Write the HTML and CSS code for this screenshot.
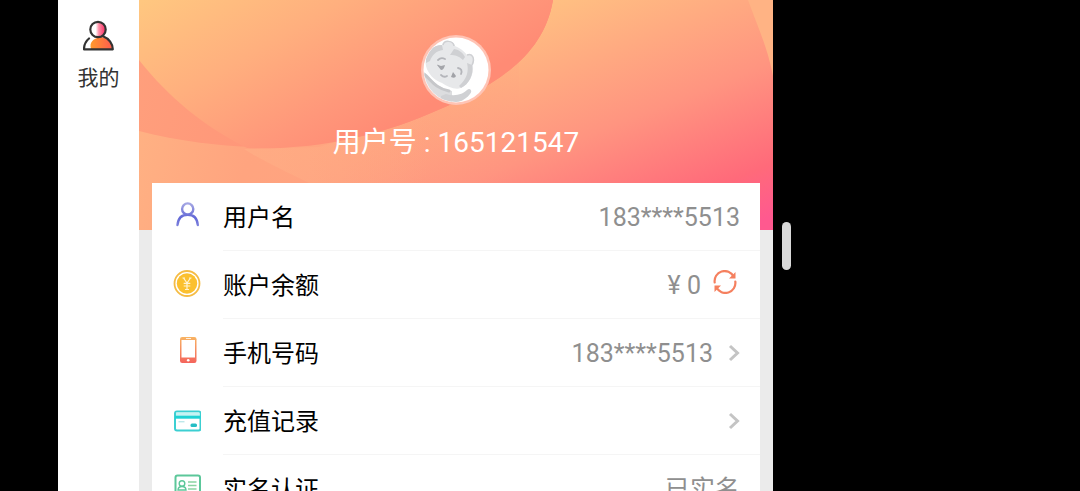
FILE: index.html
```html
<!DOCTYPE html>
<html lang="zh-CN">
<head>
  <meta charset="UTF-8" />
  <meta name="viewport" content="width=device-width, initial-scale=1" />
  <title>我的</title>
  <link rel="stylesheet" href="styles.css">
</head>
<body>
  <div class="screen">

    <!-- left navigation -->
    <nav class="sidebar">
      <a href="#mine" class="nav-item">
        <svg class="nav-icon" viewBox="0 0 32 32" aria-hidden="true">
          <defs>
            <linearGradient id="navHead" x1="0" y1="0" x2="1" y2="0">
              <stop offset="0.35" stop-color="#fff" />
              <stop offset="0.55" stop-color="#ff8fa8" />
              <stop offset="1" stop-color="#f9285f" />
            </linearGradient>
            <linearGradient id="navBody" x1="0" y1="0" x2="1" y2="0">
              <stop offset="0" stop-color="#ff9a2c" />
              <stop offset="1" stop-color="#ff5a50" />
            </linearGradient>
          </defs>
          <path d="M8 29C6 22 10 19 17 17C24 17 29 21 30 29Z" fill="url(#navBody)" />
          <circle cx="15" cy="9.500" r="7.700" fill="url(#navHead)" stroke="#333" stroke-width="2.200" />
          <path d="M6 18.500C3 21 1 25 1 29.300H29.800C29.800 24 26 18.500 20 16.300" fill="none" stroke="#333" stroke-width="2.200" stroke-linejoin="round" stroke-linecap="round" />
        </svg>
        <span>我的</span>
      </a>
    </nav>

    <main class="page">
      <!-- profile header -->
      <header class="hero">
        <svg class="hero-bg" viewBox="0 0 634 230" preserveAspectRatio="none" aria-hidden="true">
          <defs>
            <linearGradient id="base" gradientUnits="userSpaceOnUse" x1="430" y1="-10" x2="535" y2="255">
              <stop offset="0" stop-color="#ffc182" />
              <stop offset="0.5" stop-color="#ff9480" />
              <stop offset="0.83" stop-color="#ff6a7a" />
              <stop offset="1" stop-color="#ff598f" />
            </linearGradient>
            <linearGradient id="bottom" gradientUnits="userSpaceOnUse" x1="0" y1="130" x2="360" y2="230">
              <stop offset="0" stop-color="#ffb183" />
              <stop offset="0.3" stop-color="#ffa47f" />
              <stop offset="1" stop-color="#ff9780" stop-opacity="0" />
            </linearGradient>
            <linearGradient id="sheen" gradientUnits="userSpaceOnUse" x1="105" y1="150" x2="290" y2="170">
              <stop offset="0" stop-color="#ffb98c" stop-opacity="0.350" />
              <stop offset="1" stop-color="#ffb98c" stop-opacity="0" />
            </linearGradient>
            <linearGradient id="wedge" gradientUnits="userSpaceOnUse" x1="0" y1="60" x2="300" y2="150">
              <stop offset="0" stop-color="#ff9f7c" />
              <stop offset="1" stop-color="#ff8b75" />
            </linearGradient>
            <linearGradient id="blob" gradientUnits="userSpaceOnUse" x1="110" y1="-70" x2="230" y2="140">
              <stop offset="0" stop-color="#ffc980" />
              <stop offset="0.45" stop-color="#ffaf7e" />
              <stop offset="0.8" stop-color="#ff977a" />
              <stop offset="1" stop-color="#ff8b75" />
            </linearGradient>
          </defs>
          <rect width="634" height="230" fill="url(#base)" />
          <rect width="380" height="230" fill="url(#bottom)" />
          <path d="M105 149C124 161 142 169 170 183H300V110L180 147Z" fill="url(#sheen)" />
          <path d="M0 0H414C404 60 350 90 280 118C190 154 90 154 0 131Z" fill="url(#wedge)" />
          <path d="M0 0H414C404 60 350 90 280 118C220 142 160 150 108 148C66 127 30 98 0 60Z" fill="url(#blob)" />
          <path d="M609 0H634V76C628 45 617 23 609 0Z" fill="#ffb384" />
        </svg>

        <svg class="avatar" viewBox="0 0 70 70" role="img" aria-label="头像">
          <defs>
            <clipPath id="face"><circle cx="35" cy="35" r="32" /></clipPath>
          </defs>
          <circle cx="35" cy="35" r="35" fill="#ffc4b5" />
          <circle cx="35" cy="35" r="32.500" fill="#fff" />
          <g clip-path="url(#face)">
            <path d="M1 38C10 41 14 53 31 56V70H12L0 56Z" fill="#dcdddf" />
            <path d="M3 39C10 44 13 53 28 56" fill="none" stroke="#c6c7ca" stroke-width="3" stroke-linecap="round" />
            <!-- head with both ears -->
            <path d="M5 31C3 19 11 10 21 10C22 5 33 5 34 11C39 13 43 16 46 20C52 18 55 24 52 30C53 40 48 49 40 53C34 55 27 52 21 48C13 45 7 39 5 31Z" fill="#e7e8ea" />
            <path d="M5 28C4 17 12 10 21 10L22 15C15 16 11 20 9 26Z" fill="#cfd0d3" />
            <path d="M33 14C39 15 42 18 44 22L42 25C38 21 34 20 29 20Z" fill="#cfd0d3" />
            <path d="M51 30C53 40 48 49 40 53L38 51C46 44 48 36 46 28Z" fill="#cfd0d3" />
            <path d="M22 10C23 5 32 5 33 11M46 20C52 18 54 24 51 30" fill="none" stroke="#cfd0d3" stroke-width="1.500" />
            <path d="M25 59C34 62 42 59 46 55C49 52 52 56 49 59C44 66 32 71 20 68V61Z" fill="#d0d1d4" />
            <path d="M17 25Q20 22 24 24M37 33Q42 34 40 39M20 40Q23 43 26 41" fill="none" stroke="#b4b5ba" stroke-width="1.800" stroke-linecap="round" />
            <path d="M16 30C17 29 19 31 20 31L24 30Q23 35 20 35Z" fill="#a4a5aa" />
            <path d="M32 37L35 41Q34 44 30 42Z" fill="#a1a2a7" />
          </g>
        </svg>
        <h1 class="user-id">用户号 : 165121547</h1>
      </header>

      <!-- account list -->
      <ul class="card">
        <li class="row">
          <svg class="row-icon" viewBox="0 0 28 28" aria-hidden="true">
            <defs>
              <linearGradient id="user" x1="0" y1="0" x2="0" y2="28" gradientUnits="userSpaceOnUse">
                <stop offset="0.1" stop-color="#a3a5e3" />
                <stop offset="0.6" stop-color="#6268d6" />
                <stop offset="1" stop-color="#8a8de0" />
              </linearGradient>
            </defs>
            <g fill="none" stroke="url(#user)" stroke-width="2.400" stroke-linecap="round">
              <circle cx="14.700" cy="8" r="5.600" />
              <path d="M4.500 24C5.100 17 9 13.700 14.700 13.700S24.200 17 24.800 24" />
            </g>
          </svg>
          <div class="row-body">
            <span class="name">用户名</span>
            <span class="value">183****5513</span>
          </div>
        </li>

        <li class="row">
          <svg class="row-icon" viewBox="0 0 28 28" aria-hidden="true">
            <circle cx="14" cy="14.500" r="12.500" fill="#fff" stroke="#f5bc45" stroke-width="1.800" />
            <circle cx="14" cy="14.500" r="10.200" fill="#fbc02f" />
            <path d="M10.500 9L14 14L17.500 9M14 14V20.500M10.700 14.300H17.300M10.700 17H17.300M12 20.500H16M9.500 9H12M16 9H18.500" fill="none" stroke="#fff3d2" stroke-width="1.200" />
          </svg>
          <div class="row-body">
            <span class="name">账户余额</span>
            <span class="value">¥ 0</span>
            <button type="button" class="refresh" aria-label="刷新">
              <svg viewBox="0 0 24 24" aria-hidden="true">
                <g fill="none" stroke="#f5805f" stroke-width="2.200" stroke-linecap="round" stroke-linejoin="round">
                  <path d="M1.700 12.500A10 10 0 0 1 20.500 6.500" />
                  <path d="M22.300 11.500A10 10 0 0 1 3.500 17.500" />
                </g>
                <path d="M22.500 2V8.500H16ZM1.500 22V15.500H8Z" fill="#f5805f" />
              </svg>
            </button>
          </div>
        </li>

        <li>
          <a href="#phone" class="row">
            <svg class="row-icon" viewBox="0 0 28 28" aria-hidden="true">
              <defs>
                <linearGradient id="phone" x1="0" y1="0" x2="0" y2="1">
                  <stop offset="0" stop-color="#f8b463" />
                  <stop offset="1" stop-color="#f4645c" />
                </linearGradient>
              </defs>
              <rect x="7" y="0" width="16.500" height="26" rx="2.200" fill="url(#phone)" />
              <rect x="8.500" y="3" width="13.500" height="17.500" fill="#fff" />
              <path d="M13 1.500H18" stroke="#fff" stroke-width="0.800" />
              <circle cx="15.200" cy="23.200" r="1.300" fill="#fff" />
            </svg>
            <div class="row-body">
              <span class="name">手机号码</span>
              <span class="value">183****5513</span>
              <svg class="arrow" viewBox="0 0 12 20" aria-hidden="true"><path d="M2 3L9.500 10L2 17" /></svg>
            </div>
          </a>
        </li>

        <li>
          <a href="#recharge" class="row">
            <svg class="row-icon" viewBox="0 0 28 28" aria-hidden="true">
              <rect x="2" y="6.500" width="25.500" height="19" rx="2" fill="#fff" stroke="#3ccfd2" stroke-width="2" />
              <path d="M3 7.500H26.500V11H3Z" fill="#c5f3f3" />
              <path d="M2 12.200H27.500" stroke="#20d2d4" stroke-width="3" />
              <path d="M5.500 16.800H11.500" stroke="#a2dfe2" stroke-width="1" />
              <rect x="17.500" y="18.500" width="6.500" height="3.500" rx="1.500" fill="#24bdc4" />
            </svg>
            <div class="row-body">
              <span class="name">充值记录</span>
              <svg class="arrow" viewBox="0 0 12 20" aria-hidden="true"><path d="M2 3L9.500 10L2 17" /></svg>
            </div>
          </a>
        </li>

        <li class="row">
          <svg class="row-icon" viewBox="0 0 28 28" aria-hidden="true">
            <g fill="none" stroke="#5cc79a">
              <rect x="2.500" y="2.500" width="24.500" height="22" rx="2" stroke-width="2" />
              <circle cx="9" cy="10.500" r="2.800" stroke-width="1.400" />
              <path d="M5 17C5.300 12.300 12.700 12.300 13 17Z" stroke-width="1.400" />
              <path d="M15 9H23.500M15 12.500H23.500M15 16H23.500" stroke="#8bd3a2" stroke-width="1.300" />
              <path d="M4.500 19H24.500" stroke="#b9dc82" stroke-width="1.500" />
            </g>
          </svg>
          <div class="row-body">
            <span class="name">实名认证</span>
            <span class="value">已实名</span>
          </div>
        </li>
      </ul>
    </main>

    <!-- black strip with the drag handle -->
    <aside class="side-strip">
      <div class="handle"></div>
    </aside>
  </div>
</body>
</html>
```
FILE: styles.css
```css
* {
  box-sizing: border-box;
}

body {
  margin: 0;
  background-color: #000;
  font-family: Roboto, "Noto Sans CJK SC", sans-serif;
  color: #000;
}

a {
  color: inherit;
  text-decoration: none;
}

.screen {
  display: flex;
  height: 100vh;
  padding-left: 58px;
  overflow: hidden;
}

/* left navigation */
.sidebar {
  flex: 0 0 81px;
  background-color: #fff;
}

.nav-item {
  display: flex;
  flex-direction: column;
  align-items: center;
  gap: 10px;
  padding-top: 20px;
  font-size: 21px;
  line-height: 32px;
  color: #333;
}

.nav-icon {
  width: 32px;
  height: 32px;
}

/* main column */
.page {
  flex: 1;
  min-width: 0;
  background-color: #ebebeb;
}

.hero {
  position: relative;
  display: flex;
  flex-direction: column;
  align-items: center;
  gap: 16px;
  height: 230px;
  padding-top: 35px;
}

.hero-bg {
  position: absolute;
  top: 0;
  left: 0;
  width: 100%;
  height: 100%;
}

.avatar {
  position: relative;
  width: 70px;
  height: 70px;
}

.user-id {
  position: relative;
  margin: 0;
  font-size: 28px;
  font-weight: 400;
  line-height: 44px;
  color: #fff;
}

/* account list */
.card {
  position: relative;
  margin: -47px 13px 0;
  padding: 0;
  list-style: none;
  background-color: #fff;
}

.row {
  display: flex;
  align-items: center;
  gap: 22px;
  padding-left: 21px;
}

.row-icon {
  flex: none;
  width: 28px;
  height: 28px;
  margin-bottom: 4px;
}

.row-body {
  display: flex;
  flex: 1;
  align-items: baseline;
  height: 68px;
  padding-right: 20px;
  border-bottom: 1px solid #f5f5f5;
  line-height: 70px;
}

.name {
  margin-right: auto;
  font-size: 24px;
}

.value {
  font-size: 25px;
  color: #8f8f8f;
}

.refresh {
  align-self: center;
  width: 24px;
  height: 24px;
  margin: 0 3px 6px 12px;
  padding: 0;
  border: none;
  background: none;
  cursor: pointer;
}

.refresh svg {
  display: block;
}

.arrow {
  align-self: center;
  width: 12px;
  height: 20px;
  margin-left: 15px;
  fill: none;
  stroke: #c4c4c4;
  stroke-width: 3;
}

/* right strip */
.side-strip {
  display: flex;
  align-items: center;
  flex: 0 0 307px;
  padding-left: 9px;
}

.handle {
  width: 9px;
  height: 48px;
  border-radius: 5px;
  background-color: #d9d9d9;
}
```
